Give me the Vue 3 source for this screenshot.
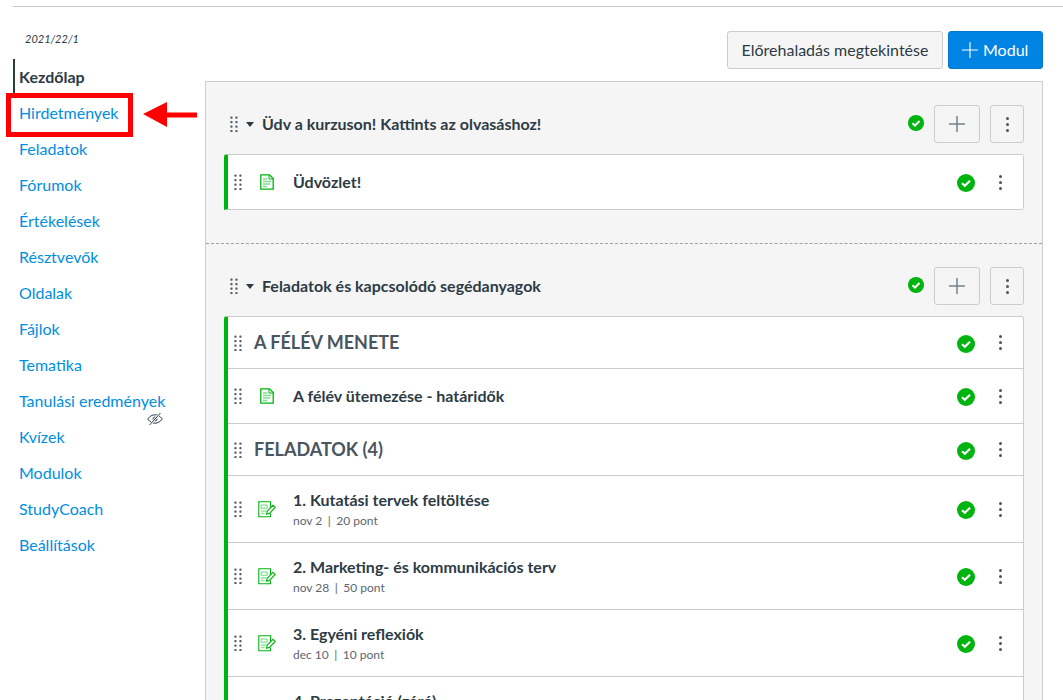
<script setup>
const nav = ['Hirdetmények','Feladatok','Fórumok','Értékelések','Résztvevők','Oldalak','Fájlok','Tematika','Tanulási eredmények','Kvízek','Modulok','StudyCoach','Beállítások']
const first = [{ title: 'Üdvözlet!', type: 'page' }]
const second = [
  { title: 'A FÉLÉV MENETE', type: 'head' },
  { title: 'A félév ütemezése - határidők', type: 'page' },
  { title: 'FELADATOK (4)', type: 'head' },
  { title: '1. Kutatási tervek feltöltése', type: 'task', meta: ['nov 2', '20 pont'] },
  { title: '2. Marketing- és kommunikációs terv', type: 'task', meta: ['nov 28', '50 pont'] },
  { title: '3. Egyéni reflexiók', type: 'task', meta: ['dec 10', '10 pont'] },
  { title: '4. Prezentáció (záró)', type: 'task' },
]
const modules = [
  { title: 'Üdv a kurzuson! Kattints az olvasáshoz!', items: first },
  { title: 'Feladatok és kapcsolódó segédanyagok', items: second },
]
const dots = [[0,0.5],[5,0.5],[0,5],[5,5],[0,9.5],[5,9.5],[0,14],[5,14]]
</script>

<template>
  <div class="page">
    <div class="rule"></div>
    <div class="body">
      <aside class="side">
        <div class="term">2021/22/1</div>
        <a class="nav home">Kezdőlap</a>
        <a v-for="n in nav" :key="n" class="nav">
          {{ n }}
          <svg v-if="n === 'Tanulási eredmények'" class="eye" viewBox="0 0 16 14" width="16" height="14">
            <path d="M.7 7C3 4 5.300 2.800 8 2.800S13 4 15.300 7C13 10 10.700 11.200 8 11.200S3 10 .7 7Z" fill="none" stroke="#2d3b45" stroke-width="1"/>
            <circle cx="8" cy="7" r="2.500" fill="#66717a"/>
            <path d="M2.500 13 13.500 1" stroke="#fff" stroke-width="2.200"/>
            <path d="M2.500 13 13.500 1" stroke="#2d3b45" stroke-width="1"/>
          </svg>
        </a>
      </aside>
      <main class="main">
        <div class="actions">
          <button class="btn">Előrehaladás megtekintése</button>
          <button class="btn primary">
            <svg width="16" height="16" viewBox="0 0 16 16"><path d="M8 0v16M0 8h16" stroke="#fff" stroke-width="1.100"/></svg>
            Modul
          </button>
        </div>
        <div class="modules">
          <section v-for="m in modules" :key="m.title" class="module">
            <header class="mhead">
              <svg class="grip" width="8" height="16" viewBox="0 0 8 16"><rect v-for="d in dots" :key="d.join()" :x="d[0] + 0.300" :y="d[1]" width="2.300" height="2.300" rx="0.800" fill="#55606a"/></svg>
              <span class="caret"></span>
              <h2>{{ m.title }}</h2>
              <svg class="check small" viewBox="0 0 16 16"><circle cx="8" cy="8" r="8" fill="#00b40f"/><path d="M4.500 8.200 7 10.500l4.500-4.500" fill="none" stroke="#fff" stroke-width="2"/></svg>
              <button class="square add"><svg width="18" height="18" viewBox="0 0 18 18"><path d="M9 1v16M1 9h16" stroke="#73818c" stroke-width="1.500"/></svg></button>
              <button class="square more"><i></i><i></i><i></i></button>
            </header>
            <div class="list">
              <div v-for="it in m.items" :key="it.title" class="row" :class="it.type">
                <svg class="grip" width="8" height="16" viewBox="0 0 8 16"><rect v-for="d in dots" :key="d.join()" :x="d[0] + 0.300" :y="d[1]" width="2.300" height="2.300" rx="0.800" fill="#55606a"/></svg>
                <svg v-if="it.type === 'page'" class="ticon" width="14" height="16" viewBox="0 0 14 16">
                  <path d="M.8.800h8.700l3.700 3.700v10.700H.8Z" fill="#fff" stroke="#00b40f" stroke-width="1.300"/>
                  <path d="M9 1v4h4" fill="none" stroke="#00b40f" stroke-width="1"/>
                  <path d="M3 5h4.500M3 7.500h8M3 10h7M3 12.500h4" stroke="#7fdf8c" stroke-width="1.700"/>
                </svg>
                <svg v-else-if="it.type === 'task'" class="ticon wide" width="18" height="17" viewBox="0 0 18 17">
                  <path d="M12.500 7V.8H.8v15h11.700v-3" fill="#fff" stroke="#00b40f" stroke-width="1.100"/>
                  <path d="M3.200 4h6v3.200h-6Z" fill="#fff" stroke="#6ad87a" stroke-width="1"/>
                  <path d="M3 10h5.500M3 12.500h3.500" fill="none" stroke="#8fe39b" stroke-width="1.300"/>
                  <path d="m8.500 13.200.8-3.200L15 4.300l2.200 2.200-5.700 5.900Z" fill="#fff" stroke="#00b40f" stroke-width="1.100"/>
                </svg>
                <div class="text">
                  <div class="title">{{ it.title }}</div>
                  <div v-if="it.type === 'task'" class="meta">
                    <template v-if="it.meta"><span>{{ it.meta[0] }}</span><b>|</b><span>{{ it.meta[1] }}</span></template>
                    <template v-else>&nbsp;</template>
                  </div>
                </div>
                <svg class="check" viewBox="0 0 18 18"><circle cx="9" cy="9" r="9" fill="#00b40f"/><path d="M5 9.300l2.800 2.500L13 6.800" fill="none" stroke="#fff" stroke-width="2.200"/></svg>
                <span class="more plain"><i></i><i></i><i></i></span>
              </div>
            </div>
          </section>
        </div>
      </main>
    </div>
    <div class="marker"></div>
    <svg class="arrow" width="55" height="28" viewBox="0 0 55 28"><path d="M0 13 24 1v10.500l30 0v5H24V26Z" fill="#f00"/></svg>
  </div>
</template>

<style>
html, body { margin: 0; overflow: hidden; background: #fff; }
</style>

<style scoped>
.page { position: relative; height: 700px; overflow: hidden; font-family: Lato, "Open Sans", sans-serif; color: #2d3b45; background: #fff; }
.rule { height: 1px; margin: 6px 0 0 13px; background: #c7cdd1; }
.body { display: flex; }
.side { width: 192px; margin-left: 13px; flex: none; }
.term { height: 18px; padding: 23px 0 0 12px; font-size: 11px; line-height: 18px; font-style: italic; color: #2d3b45; margin-bottom: 11px; }
.nav { display: block; position: relative; height: 36px; line-height: 36px; padding-left: 6px; font-size: 16px; color: #008ee2; white-space: nowrap; }
.home { height: 34px; line-height: 36px; padding-left: 4px; border-left: 2px solid #2d3b45; font-weight: 700; color: #2d3b45; }
.nav.home + .nav { margin-top: 2px; }
.eye { position: absolute; left: 134px; top: 29px; }
.main { width: 838px; flex: none; }
.actions { display: flex; justify-content: flex-end; gap: 5px; padding-top: 24px; height: 38px; margin-bottom: 12px; }
.btn { height: 38px; width: 216px; box-sizing: border-box; padding: 0; border: 1px solid #c7cdd1; border-radius: 3px; background: #f5f5f5; color: #2d3b45; font: 16px/1 Lato, sans-serif; }
.primary { display: flex; align-items: center; gap: 5px; width: 95px; padding-left: 13px; background: #0084e3; border-color: #0078d0; color: #fff; }
.modules { border: 1px solid #c7cdd1; border-bottom: 0; background: #f5f5f5; }
.module { padding: 0 18px 33px; }
.module + .module { border-top: 1px dashed #9aa3aa; }
.mhead { display: flex; align-items: center; box-sizing: border-box; height: 72px; padding: 12px 0 0 6px; }
.caret { width: 0; height: 0; margin: 0 8px; border: 4px solid transparent; border-top: 5px solid #2d3b45; border-bottom: 0; }
.mhead h2 { flex: 1; margin: 0 0 2px; font-size: 16px; font-weight: 700; color: #2d3b45; }
.check { display: block; width: 18px; height: 18px; flex: none; }
.check.small { width: 16px; height: 16px; margin: 0 10px 0 0; position: relative; top: -1px; }
.square { display: flex; flex-direction: column; align-items: center; justify-content: center; box-sizing: border-box; height: 38px; border: 1px solid #c7cdd1; border-radius: 3px; background: #f5f5f5; padding: 0; }
.add { width: 46px; margin-right: 10px; }
.square.more { width: 34px; }
.more i { display: block; width: 3px; height: 3px; border-radius: 50%; background: #4a5560; margin: 1.500px 0; }
.list { box-sizing: border-box; border: 1px solid #c7cdd1; border-left: 4px solid #00b40f; border-radius: 3px 3px 3px 0; background: #fff; }
.row { display: flex; align-items: center; box-sizing: border-box; padding-left: 6px; }
.row + .row { border-top: 1px solid #c7cdd1; }
.row.page { height: 55px; }
.row.head { height: 52px; }
.row.task { height: 67px; }
.row.page:first-child { height: 54px; }
.row.head:first-child { height: 51px; }
.list .grip { flex: none; margin-right: 18px; }
.list .task .grip { margin-right: 16px; }
.list .head .grip { margin-right: 12px; }
.ticon { flex: none; margin-right: 19px; }
.ticon.wide { margin-right: 17px; }
.text { flex: 1; min-width: 0; }
.title { font-size: 16px; font-weight: 700; line-height: 20px; color: #2d3b45; }
.head .title { font-size: 18px; color: #4a5560; margin-bottom: 2px; }
.meta { margin-top: 4px; font-size: 12px; line-height: 14px; color: #5b666f; }
.meta b { font-weight: 400; margin: 0 5.500px; }
.row .check { margin-right: 24px; position: relative; top: 1px; }
.more.plain { display: flex; flex-direction: column; align-items: center; width: 3px; margin-right: 21px; }
.marker { position: absolute; left: 6px; top: 93px; width: 127px; height: 44px; box-sizing: border-box; border: 5px solid #f00; }
.arrow { position: absolute; left: 143px; top: 101px; }
</style>
